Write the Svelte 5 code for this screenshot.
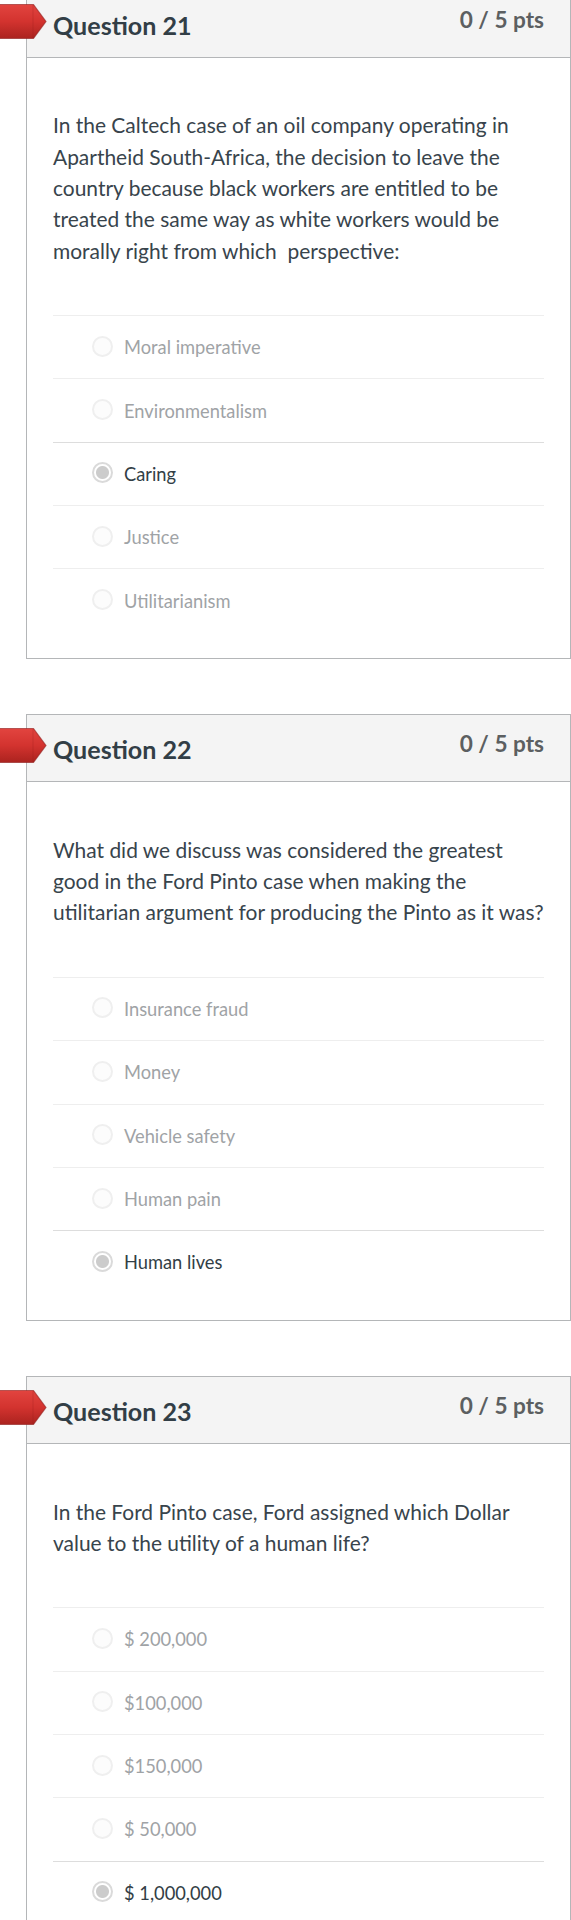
<script lang="ts">
  type Question = {
    name: string;
    points: string;
    lines: string[];
    answers: string[];
    selected: number;
  };

  const questions: Question[] = [
    {
      name: 'Question 21',
      points: '0 / 5 pts',
      lines: [
        'In the Caltech case of an oil company operating in',
        'Apartheid South-Africa, the decision to leave the',
        'country because black workers are entitled to be',
        'treated the same way as white workers would be',
        'morally right from which\u00a0 perspective:'
      ],
      answers: ['Moral imperative', 'Environmentalism', 'Caring', 'Justice', 'Utilitarianism'],
      selected: 2
    },
    {
      name: 'Question 22',
      points: '0 / 5 pts',
      lines: [
        'What did we discuss was considered the greatest',
        'good in the Ford Pinto case when making the',
        'utilitarian argument for producing the Pinto as it was?'
      ],
      answers: ['Insurance fraud', 'Money', 'Vehicle safety', 'Human pain', 'Human lives'],
      selected: 4
    },
    {
      name: 'Question 23',
      points: '0 / 5 pts',
      lines: [
        'In the Ford Pinto case, Ford assigned which Dollar',
        'value to the utility of a human life?'
      ],
      answers: ['$ 200,000', '$100,000', '$150,000', '$ 50,000', '$ 1,000,000'],
      selected: 4
    }
  ];
</script>

<main class="quiz">
  {#each questions as question}
    <section class="question">
      <svg class="flag" width="48" height="38" viewBox="0 0 48 38" aria-hidden="true">
        <defs>
          <linearGradient id="flag-red" x1="0" y1="0" x2="0" y2="1">
            <stop offset="0" stop-color="#e2443f" />
            <stop offset="0.5" stop-color="#d3332f" />
            <stop offset="1" stop-color="#ab231f" />
          </linearGradient>
        </defs>
        <path d="M-2 1.5H33.5L46 18.5L33.5 35.5H-2Z" fill="url(#flag-red)" stroke="#8f1d1a" stroke-opacity="0.6" stroke-width="1.2" />
        <path d="M33 2V35" stroke="#8f1d1a" stroke-opacity="0.25" />
      </svg>
      <header class="header">
        <h2 class="name">{question.name}</h2>
        <span class="points">{question.points}</span>
      </header>
      <div class="text">
        <p class="prompt">
          {#each question.lines as line}
            <span class="line">{line}</span>
          {/each}
        </p>
        <ul class="answers">
          {#each question.answers as answer, i}
            <li class="answer" class:selected={i === question.selected}>
              <span class="radio"></span>
              <span class="label">{answer}</span>
            </li>
          {/each}
        </ul>
      </div>
    </section>
  {/each}
</main>

<style>
  :global(body) {
    margin: 0;
    background: #fff;
  }

  .quiz {
    box-sizing: border-box;
    height: 1920px;
    overflow: hidden;
    padding-left: 26px;
    font-family: Lato, "Liberation Sans", sans-serif;
    color: #38444c;
  }

  .question {
    position: relative;
    box-sizing: border-box;
    margin-bottom: 55.3px;
    border: 1px solid #b4b6b8;
  }

  .question:first-child {
    margin-top: -10px;
  }

  .flag {
    position: absolute;
    left: -27px;
    top: 11.5px;
  }

  .header {
    display: flex;
    justify-content: space-between;
    align-items: flex-start;
    box-sizing: border-box;
    height: 67px;
    padding: 0 26px;
    background: #f4f4f4;
    border-bottom: 1px solid #b4b6b8;
  }

  .name {
    margin: 18px 0 0;
    font-size: 25.1px;
    line-height: 32px;
    font-weight: 700;
    color: #323e46;
  }

  .points {
    margin-top: 13px;
    font-size: 22.6px;
    line-height: 32px;
    font-weight: 700;
    color: #5c5f61;
  }

  .text {
    padding: 51.4px 26px 26.4px;
  }

  .prompt {
    margin: 0 0 49px;
    font-size: 20.95px;
    line-height: 31.33px;
  }

  .line {
    display: block;
    white-space: nowrap;
  }

  .answers {
    margin: 0;
    padding: 0;
    list-style: none;
  }

  .answer {
    display: flex;
    align-items: center;
    box-sizing: border-box;
    height: 63.35px;
    padding-left: 39px;
    border-top: 1px solid #eeeeee;
  }

  .answer.selected {
    border-top-color: #dddddd;
  }

  .radio {
    position: relative;
    box-sizing: border-box;
    width: 21px;
    height: 21px;
    margin: 0 11px 2px 0;
    border: 2px solid #efefef;
    border-radius: 50%;
    background: #fcfcfc;
  }

  .selected .radio {
    border-color: #dadada;
    background: radial-gradient(circle, #cccccc 6px, #ffffff 7px);
  }

  .label {
    font-size: 18.3px;
    line-height: 26px;
    color: #9fa3a6;
  }

  .selected .label {
    color: #323e46;
  }
</style>
